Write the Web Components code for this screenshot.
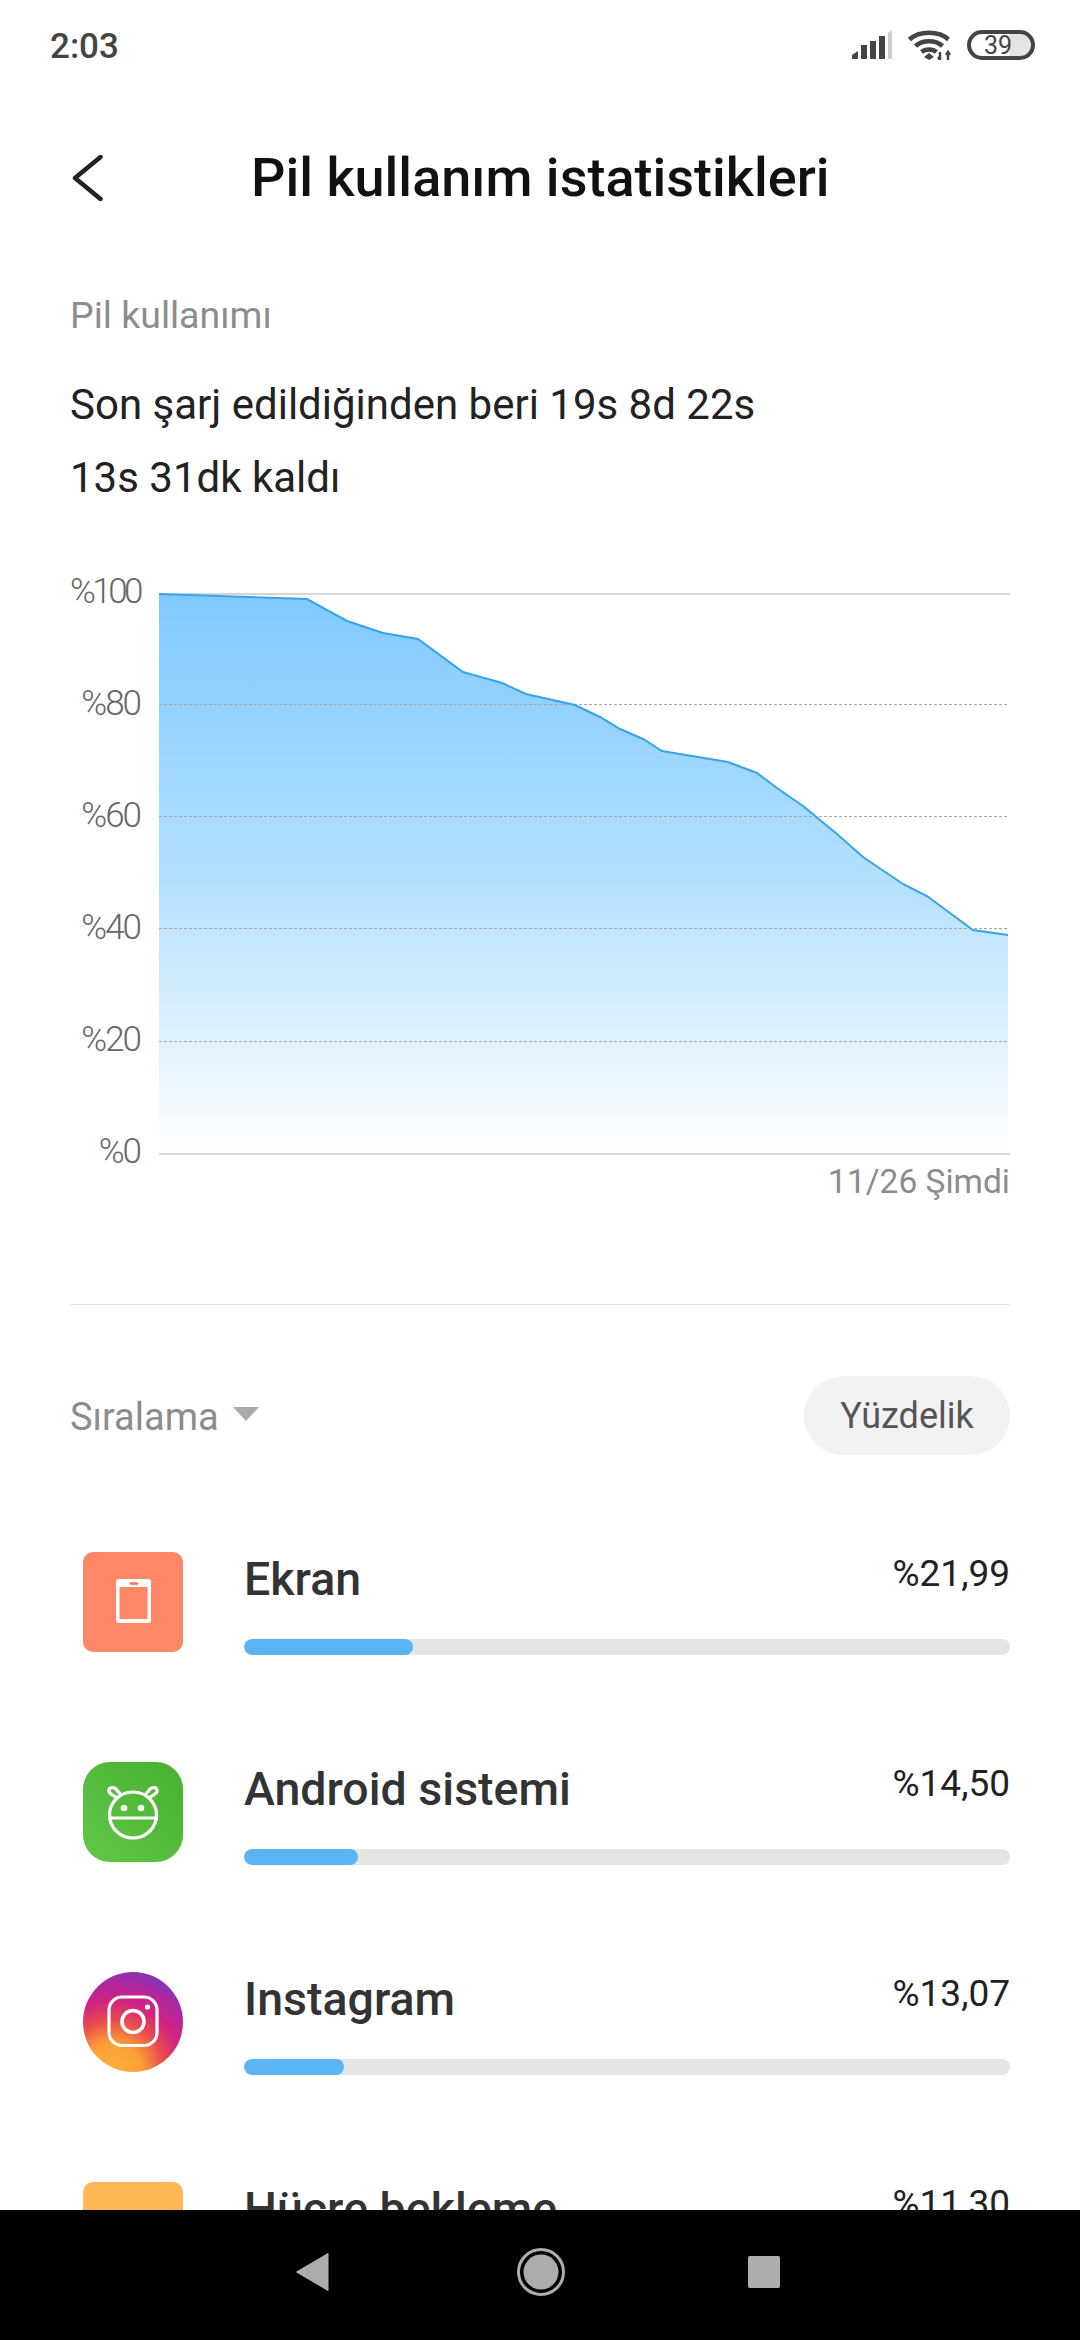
<!DOCTYPE html>
<html lang="tr">
<head>
<meta charset="utf-8">
<title>Pil kullanım istatistikleri</title>
<style>
  html, body { margin: 0; padding: 0; background: #fff; }
  body { width: 1080px; height: 2340px; overflow: hidden; font-family: Roboto, "Noto Sans", sans-serif; }
</style>
</head>
<body>
<battery-screen>
  <status-bar slot="top" time="2:03" level="39"></status-bar>
  <title-bar slot="top">Pil kullanım istatistikleri</title-bar>
  <usage-summary label="Pil kullanımı">
    <span>Son şarj edildiğinden beri 19s 8d 22s</span>
    <span>13s 31dk kaldı</span>
  </usage-summary>
  <usage-chart></usage-chart>
  <sort-row label="Sıralama" mode="Yüzdelik"></sort-row>
  <usage-row name="Ekran" value="%21,99" fill="169">
    <svg slot="icon" viewBox="0 0 100 100" width="100" height="100">
      <rect width="100" height="100" rx="10" fill="#fd8766"/>
      <rect x="33" y="27" width="35" height="44" rx="3" fill="#fff"/>
      <rect x="36.500" y="35" width="28" height="32" fill="#fd8766"/>
      <rect x="46.500" y="30" width="9" height="3" rx="1.500" fill="#fd8766"/>
    </svg>
  </usage-row>
  <usage-row name="Android sistemi" value="%14,50" fill="114">
    <svg slot="icon" viewBox="0 0 100 100" width="100" height="100">
      <defs><linearGradient id="g" x1="1" y1="0" x2="0" y2="1"><stop offset="0" stop-color="#48b030"/><stop offset="1" stop-color="#60c748"/></linearGradient></defs>
      <rect width="100" height="100" rx="27" fill="url(#g)"/>
      <g fill="none" stroke="#fff" stroke-width="3.200" stroke-linecap="round">
        <ellipse cx="50" cy="53" rx="23.500" ry="23"/>
        <path d="M26.500 56H73.500"/>
        <path d="M33 35C29 33 25 31 26 27.500C27 25 31 25 33 27C34 28.500 35 30 36.500 31"/>
        <path d="M67 35C71 33 75 31 74 27.500C73 25 69 25 67 27C66 28.500 65 30 63.500 31"/>
      </g>
      <circle cx="41" cy="46" r="3.300" fill="#fff"/>
      <circle cx="58" cy="46" r="3.300" fill="#fff"/>
    </svg>
  </usage-row>
  <usage-row name="Instagram" value="%13,07" fill="100">
    <svg slot="icon" viewBox="0 0 100 100" width="100" height="100">
      <defs>
        <radialGradient id="ig" cx="0.3" cy="1" r="1.050">
          <stop offset="0" stop-color="#fdb23e"/>
          <stop offset="0.28" stop-color="#fb9f38"/>
          <stop offset="0.5" stop-color="#e8484f"/>
          <stop offset="0.68" stop-color="#cf2283"/>
          <stop offset="0.85" stop-color="#b0279f"/>
          <stop offset="1" stop-color="#7f36b8"/>
        </radialGradient>
      </defs>
      <circle cx="50" cy="50" r="50" fill="url(#ig)"/>
      <g fill="none" stroke="#fff">
        <rect x="26" y="25" width="48" height="48.500" rx="13" stroke-width="3.200"/>
        <circle cx="50" cy="49.500" r="11" stroke-width="3.600"/>
      </g>
      <circle cx="64.500" cy="35" r="2.600" fill="#fff"/>
    </svg>
  </usage-row>
  <usage-row name="Hücre bekleme" value="%11,30" fill="87">
    <svg slot="icon" viewBox="0 0 100 100" width="100" height="100">
      <rect width="100" height="100" rx="10" fill="#ffb855"/>
    </svg>
  </usage-row>
  <nav-bar slot="bottom"></nav-bar>
</battery-screen>

<script>
class BatteryScreen extends HTMLElement {
  constructor() {
    super();
    this.attachShadow({ mode: "open" });
    this.shadowRoot.innerHTML = `
      <style>
        :host { display: flex; flex-direction: column; width: 1080px; height: 2340px; background: #fff; }
        .content { flex: 1; min-height: 0; overflow: hidden; padding: 0 70px; }
      </style>
      <slot name="top"></slot>
      <div class="content"><slot></slot></div>
      <slot name="bottom"></slot>
    `;
  }
}

class StatusBar extends HTMLElement {
  constructor() {
    super();
    this.attachShadow({ mode: "open" });
  }

  connectedCallback() {
    this.shadowRoot.innerHTML = `
      <style>
        :host { display: flex; align-items: center; justify-content: space-between; height: 90px; padding: 0 45px 0 50px; box-sizing: border-box; }
        .time { font: 500 35px/1 Roboto, sans-serif; color: #444; margin-top: 2px; }
        .icons { display: flex; align-items: center; gap: 15px; }
        .battery { box-sizing: border-box; width: 68px; height: 30px; border: 4px solid #444; border-radius: 15px; display: flex; align-items: center; justify-content: center; padding-right: 6px; font: 400 25px/1 Roboto, sans-serif; color: #444; background: linear-gradient(90deg, #fff 0 64%, #e4e4e4 64%); }
      </style>
      <span class="time">${this.getAttribute("time")}</span>
      <div class="icons">
        <svg viewBox="0 0 41 30" width="41" height="30">
          <path d="M0 29V25L6 21V29Z" fill="#444"/>
          <rect x="9" y="15" width="6" height="14" fill="#444"/>
          <rect x="18" y="11" width="6" height="18" fill="#444"/>
          <rect x="27" y="6" width="6" height="23" fill="#444"/>
          <path d="M36 3L40 0V29H36Z" fill="#ccc"/>
        </svg>
        <svg viewBox="0 0 44 30" width="44" height="30">
          <g fill="none" stroke="#444" stroke-width="4.500">
            <path d="M1.500 9.500C11 0.500 31 0.500 40.500 9.500"/>
            <path d="M7.500 16C14.500 9.500 27.500 9.500 34.500 16"/>
            <path d="M13.500 22C17.500 18.500 24.500 18.500 28.500 22"/>
          </g>
          <path d="M21 23L26 27L21 30L16 27Z" fill="#444"/>
          <path d="M32 22V30M30 27L32 30M40 22V30M38 25L40 22L42 25" fill="none" stroke="#444" stroke-width="2.500"/>
        </svg>
        <div class="battery">${this.getAttribute("level")}</div>
      </div>
    `;
  }
}

class TitleBar extends HTMLElement {
  constructor() {
    super();
    this.attachShadow({ mode: "open" });
    this.shadowRoot.innerHTML = `
      <style>
        :host { display: flex; align-items: center; height: 86px; padding: 0 0 0 72px; margin-top: 45px; margin-bottom: 69px; }
        svg { display: block; flex: none; margin-right: 148px; }
        .title { font: 500 54px/1 Roboto, sans-serif; color: #111; white-space: nowrap; }
      </style>
      <svg viewBox="0 0 31 46" width="31" height="46"><path d="M28.500 2L3 23L28.500 44" fill="none" stroke="#222" stroke-width="4.500" stroke-linecap="round" stroke-linejoin="round"/></svg>
      <span class="title"><slot></slot></span>
    `;
  }
}

class UsageSummary extends HTMLElement {
  constructor() {
    super();
    this.attachShadow({ mode: "open" });
  }

  connectedCallback() {
    this.shadowRoot.innerHTML = `
      <style>
        :host { display: block; height: 303px; }
        .label { font: 400 37.500px/50px Roboto, sans-serif; color: #8c8c8c; margin-bottom: 28px; }
        .lines { font: 400 42px/73px Roboto, sans-serif; color: #222; }
        ::slotted(span) { display: block; }
      </style>
      <div class="label">${this.getAttribute("label")}</div>
      <div class="lines"><slot></slot></div>
    `;
  }
}

class UsageChart extends HTMLElement {
  constructor() {
    super();
    this.attachShadow({ mode: "open" });
    const points = [[0,1],[148,6],[188,28],[224,40],[259,46],[304,79],[343,90],[367,101],[416,112],[441,124],[461,136],[484,146],[503,158],[569,169],[598,180],[618,195],[644,213],[678,241],[704,264],[744,291],[768,303],[814,337],[849,342]];
    const line = points.map((p) => p.join(",")).join(" ");
    const grid = [111, 223, 335, 448]
      .map((y) => `<line x1="0" x2="849" y1="${y + 0.5}" y2="${y + 0.5}" stroke="#a8a8a8" stroke-width="1" stroke-dasharray="3 2"/>`)
      .join("");
    this.shadowRoot.innerHTML = `
      <style>
        :host { display: block; height: 711px; }
        .plot { display: grid; grid-template-columns: 70px 851px; column-gap: 19px; }
        .axis { display: flex; flex-direction: column; align-items: flex-end; justify-content: space-between; height: 594px; margin: -18px 0 -14px; font: 300 35px/34px Roboto, sans-serif; color: #666; letter-spacing: -2px; }
        .axis span { height: 34px; white-space: nowrap; }
        .axis span:first-child { letter-spacing: -3.500px; }
        svg { display: block; }
        .time { margin-top: 7px; font: 400 33.500px/40px Roboto, sans-serif; color: #8c8c8c; text-align: right; }
      </style>
      <div class="plot">
        <div class="axis"><span>%100</span><span>%80</span><span>%60</span><span>%40</span><span>%20</span><span>%0</span></div>
        <svg viewBox="0 0 851 562" width="851" height="562">
          <defs>
            <linearGradient id="area" x1="0" y1="0" x2="0" y2="1">
              <stop offset="0" stop-color="#7fc9ff"/>
              <stop offset="0.5" stop-color="#b2dfff"/>
              <stop offset="1" stop-color="#ffffff"/>
            </linearGradient>
          </defs>
          <rect x="0" y="0" width="851" height="2" fill="#d6d6d6"/>
          <polygon points="0,561 ${line} 849,561" fill="url(#area)"/>
          ${grid}
          <polyline points="${line}" fill="none" stroke="#38a3ea" stroke-width="2"/>
          <rect x="0" y="560" width="851" height="2" fill="#d6d6d6"/>
        </svg>
      </div>
      <div class="time">11/26 Şimdi</div>
    `;
  }
}

class SortRow extends HTMLElement {
  constructor() {
    super();
    this.attachShadow({ mode: "open" });
  }

  connectedCallback() {
    this.shadowRoot.innerHTML = `
      <style>
        :host { display: flex; align-items: center; justify-content: space-between; height: 79px; padding-top: 71px; border-top: 1px solid #e2e2e2; margin-bottom: 97px; }
        .sort { display: flex; align-items: center; gap: 14px; margin-top: 2px; font: 400 38px/1 Roboto, sans-serif; color: #8c8c8c; }
        .sort i { width: 0; height: 0; border-left: 13.500px solid transparent; border-right: 13.500px solid transparent; border-top: 14px solid #aaa; margin-top: -6px; }
        .pill { box-sizing: border-box; width: 206px; height: 79px; border-radius: 40px; background: #f2f2f2; display: flex; align-items: center; justify-content: center; font: 400 36px/1 Roboto, sans-serif; color: #555; }
      </style>
      <div class="sort">${this.getAttribute("label")}<i></i></div>
      <div class="pill">${this.getAttribute("mode")}</div>
    `;
  }
}

class UsageRow extends HTMLElement {
  constructor() {
    super();
    this.attachShadow({ mode: "open" });
  }

  connectedCallback() {
    const fill = this.getAttribute("fill");
    this.shadowRoot.innerHTML = `
      <style>
        :host { display: flex; height: 210px; padding-left: 13px; }
        .icon { flex: none; width: 100px; height: 100px; margin-right: 61px; }
        ::slotted(svg) { display: block; }
        .body { flex: 1; min-width: 0; }
        .top { display: flex; justify-content: space-between; height: 87px; }
        .name { font: 500 46.500px/54px Roboto, sans-serif; color: #333; }
        .value { font: 400 37px/44px Roboto, sans-serif; color: #222; }
        .track { height: 16px; border-radius: 8px; background: #e5e5e5; overflow: hidden; }
        .fill { height: 100%; border-radius: 8px; background: #5ab5f2; width: ${fill}px; }
      </style>
      <div class="icon"><slot name="icon"></slot></div>
      <div class="body">
        <div class="top">
          <span class="name">${this.getAttribute("name")}</span>
          <span class="value">${this.getAttribute("value")}</span>
        </div>
        <div class="track"><div class="fill"></div></div>
      </div>
    `;
  }
}

class NavBar extends HTMLElement {
  constructor() {
    super();
    this.attachShadow({ mode: "open" });
    this.shadowRoot.innerHTML = `
      <style>
        :host { display: flex; align-items: center; justify-content: center; flex: none; height: 130px; background: #000; padding: 0 4px 6px 0; box-sizing: border-box; }
        .keys { display: flex; align-items: center; gap: 188px; }
        .keys svg:last-child { margin-left: -5px; }
        svg { display: block; }
      </style>
      <div class="keys">
        <svg viewBox="0 0 33 38" width="33" height="38"><path d="M0.500 19L32 0.500V37.500Z" fill="#adadad" stroke="#adadad" stroke-width="1" stroke-linejoin="round"/></svg>
        <svg viewBox="0 0 48 48" width="48" height="48"><circle cx="24" cy="24" r="22.500" fill="none" stroke="#adadad" stroke-width="3"/><circle cx="24" cy="24" r="17.500" fill="#adadad"/></svg>
        <svg viewBox="0 0 32 32" width="32" height="32"><rect width="32" height="32" rx="2" fill="#adadad"/></svg>
      </div>
    `;
  }
}

customElements.define("battery-screen", BatteryScreen);
customElements.define("status-bar", StatusBar);
customElements.define("title-bar", TitleBar);
customElements.define("usage-summary", UsageSummary);
customElements.define("usage-chart", UsageChart);
customElements.define("sort-row", SortRow);
customElements.define("usage-row", UsageRow);
customElements.define("nav-bar", NavBar);
</script>
</body>
</html>
